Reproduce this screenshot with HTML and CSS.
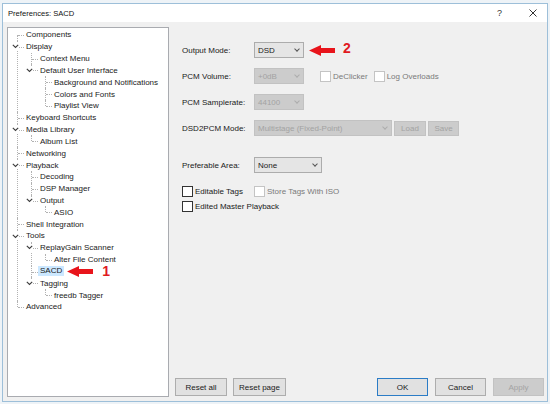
FILE: index.html
```
<!DOCTYPE html>
<html>
<head>
<meta charset="utf-8">
<link rel="stylesheet" href="styles.css">
</head>
<body>
<div class="desk">
  <div class="win">
    <div class="titlebar">
      <span class="title">Preferences: SACD</span>
      <span class="tb-help">?</span>
      <span class="tb-close"><svg width="8" height="8" viewBox="0 0 8 8"><path d="M0.5 0.5 L7.5 7.5 M7.5 0.5 L0.5 7.5" stroke="#333" stroke-width="1" fill="none"/></svg></span>
    </div>
    <div class="body">
      <div class="treebox">
        <ul class="tree">
          <li><div class="row">Components</div></li>
          <li class="exp"><div class="row"><span class="tw"><svg width="7" height="5" viewBox="0 0 7 5"><path d="M0.8 0.8 L3.5 3.5 L6.2 0.8" stroke="#3c3c3c" stroke-width="1.1" fill="none"/></svg></span>Display</div>
            <ul>
              <li><div class="row">Context Menu</div></li>
              <li class="exp"><div class="row"><span class="tw"><svg width="7" height="5" viewBox="0 0 7 5"><path d="M0.8 0.8 L3.5 3.5 L6.2 0.8" stroke="#3c3c3c" stroke-width="1.1" fill="none"/></svg></span>Default User Interface</div>
                <ul>
                  <li><div class="row">Background and Notifications</div></li>
                  <li><div class="row">Colors and Fonts</div></li>
                  <li><div class="row">Playlist View</div></li>
                </ul>
              </li>
            </ul>
          </li>
          <li><div class="row">Keyboard Shortcuts</div></li>
          <li class="exp"><div class="row"><span class="tw"><svg width="7" height="5" viewBox="0 0 7 5"><path d="M0.8 0.8 L3.5 3.5 L6.2 0.8" stroke="#3c3c3c" stroke-width="1.1" fill="none"/></svg></span>Media Library</div>
            <ul>
              <li><div class="row">Album List</div></li>
            </ul>
          </li>
          <li><div class="row">Networking</div></li>
          <li class="exp"><div class="row"><span class="tw"><svg width="7" height="5" viewBox="0 0 7 5"><path d="M0.8 0.8 L3.5 3.5 L6.2 0.8" stroke="#3c3c3c" stroke-width="1.1" fill="none"/></svg></span>Playback</div>
            <ul>
              <li><div class="row">Decoding</div></li>
              <li><div class="row">DSP Manager</div></li>
              <li class="exp"><div class="row"><span class="tw"><svg width="7" height="5" viewBox="0 0 7 5"><path d="M0.8 0.8 L3.5 3.5 L6.2 0.8" stroke="#3c3c3c" stroke-width="1.1" fill="none"/></svg></span>Output</div>
                <ul>
                  <li><div class="row">ASIO</div></li>
                </ul>
              </li>
            </ul>
          </li>
          <li><div class="row">Shell Integration</div></li>
          <li class="exp"><div class="row"><span class="tw"><svg width="7" height="5" viewBox="0 0 7 5"><path d="M0.8 0.8 L3.5 3.5 L6.2 0.8" stroke="#3c3c3c" stroke-width="1.1" fill="none"/></svg></span>Tools</div>
            <ul>
              <li class="exp"><div class="row"><span class="tw"><svg width="7" height="5" viewBox="0 0 7 5"><path d="M0.8 0.8 L3.5 3.5 L6.2 0.8" stroke="#3c3c3c" stroke-width="1.1" fill="none"/></svg></span>ReplayGain Scanner</div>
                <ul>
                  <li><div class="row">Alter File Content</div></li>
                </ul>
              </li>
              <li><div class="row"><span class="sel">SACD</span><svg class="arrow arrow-1" width="26" height="11" viewBox="0 0 26 11"><path d="M0 5.5 L12 0 L12 3 L26 3 L26 8 L12 8 L12 11 Z" fill="#e8141b"/></svg><span class="mark mark-1">1</span></div></li>
              <li class="exp"><div class="row"><span class="tw"><svg width="7" height="5" viewBox="0 0 7 5"><path d="M0.8 0.8 L3.5 3.5 L6.2 0.8" stroke="#3c3c3c" stroke-width="1.1" fill="none"/></svg></span>Tagging</div>
                <ul>
                  <li><div class="row">freedb Tagger</div></li>
                </ul>
              </li>
            </ul>
          </li>
          <li><div class="row">Advanced</div></li>
        </ul>
      </div>
      <div class="panel">
        <div class="form">
          <div class="frow">
            <span class="lbl">Output Mode:</span>
            <span class="combo w50"><span>DSD</span><span class="chev"></span></span>
            <svg class="arrow arrow-2" width="26" height="11" viewBox="0 0 26 11"><path d="M0 5.5 L12 0 L12 3 L26 3 L26 8 L12 8 L12 11 Z" fill="#e8141b"/></svg>
            <span class="mark mark-2">2</span>
          </div>
          <div class="frow">
            <span class="lbl">PCM Volume:</span>
            <span class="combo w50 dis"><span>+0dB</span><span class="chev"></span></span>
            <span class="cb dis cb-declick"></span><span class="cbtext dis">DeClicker</span>
            <span class="cb dis cb-log"></span><span class="cbtext dis">Log Overloads</span>
          </div>
          <div class="frow">
            <span class="lbl">PCM Samplerate:</span>
            <span class="combo w50 dis"><span>44100</span><span class="chev"></span></span>
          </div>
          <div class="frow">
            <span class="lbl">DSD2PCM Mode:</span>
            <span class="combo w138 dis"><span>Multistage (Fixed-Point)</span><span class="chev"></span></span>
            <span class="btn small dis w32">Load</span>
            <span class="btn small dis w31">Save</span>
          </div>
          <div class="frow pref">
            <span class="lbl">Preferable Area:</span>
            <span class="combo w68"><span>None</span><span class="chev"></span></span>
          </div>
          <div class="crow">
            <span class="ccell"><span class="cb"></span><span class="cbtext">Editable Tags</span></span>
            <span class="cb dis"></span><span class="cbtext dis">Store Tags With ISO</span>
          </div>
          <div class="crow">
            <span class="cb"></span><span class="cbtext">Edited Master Playback</span>
          </div>
        </div>
        <div class="btns">
          <span class="btn w52">Reset all</span>
          <span class="btn w53 ml6">Reset page</span>
          <span class="btn w51 ok">OK</span>
          <span class="btn w51 ml7">Cancel</span>
          <span class="btn w51 ml7 dis">Apply</span>
        </div>
      </div>
    </div>
  </div>
</div>
</body>
</html>
```
FILE: styles.css
```
html, body {
  margin: 0;
  padding: 0;
}
body {
  width: 550px;
  height: 404px;
  overflow: hidden;
  background: #eef3f7;
  font-family: "Liberation Sans", Arial, sans-serif;
  font-size: 8px;
  color: #1a1a1a;
}
.desk {
  padding: 3px 0 0 2px;
}
.win {
  width: 546px;
  height: 399px;
  box-sizing: border-box;
  border: 1px solid #9dbfd9;
  background: #f0f0f0;
  display: flex;
  flex-direction: column;
}
.titlebar {
  height: 18px;
  flex: none;
  background: #ffffff;
  display: flex;
  align-items: center;
  padding-left: 5px;
}
.title {
  font-size: 7.6px;
  color: #111;
}
.tb-help {
  margin-left: auto;
  font-size: 9px;
  color: #333;
  margin-right: 27px;
}
.tb-close {
  display: flex;
  margin-right: 10px;
}
.body {
  flex: 1;
  display: flex;
  padding: 5px 0 4px 4px;
  min-height: 0;
}
.treebox {
  width: 162px;
  flex: none;
  box-sizing: border-box;
  border: 1px solid #a9abb0;
  background: #ffffff;
}
.tree, .tree ul {
  list-style: none;
  margin: 0;
  padding: 0;
}
.tree {
  padding-top: 1px;
}
.tree ul {
  padding-left: 14px;
}
.tree li {
  position: relative;
}
.tree li::before {
  content: "";
  position: absolute;
  left: 9px;
  top: 0;
  bottom: 0;
  border-left: 1px dotted #b2b2b2;
}
.tree li:last-child::before {
  bottom: auto;
  height: 6px;
}
.tree > li:first-child::before {
  top: 6px;
}
.row {
  position: relative;
  height: 11.83px;
  padding-left: 18px;
  display: flex;
  align-items: center;
  white-space: nowrap;
}
.row::before {
  content: "";
  position: absolute;
  left: 10px;
  top: 6px;
  width: 6px;
  border-top: 1px dotted #b2b2b2;
}
.tw {
  position: absolute;
  left: 3px;
  top: 2px;
  width: 8px;
  height: 8px;
  background: #ffffff;
  z-index: 1;
  display: flex;
  align-items: center;
  justify-content: center;
}
.tw svg {
  display: block;
}
.sel {
  background: #cce8ff;
  margin-left: -2px;
  padding: 0 2px;
  line-height: 10px;
}
.arrow {
  flex: none;
  display: block;
}
.arrow-1 {
  margin-left: 3px;
}
.mark {
  color: #e01a1f;
  font-weight: bold;
  font-size: 14px;
  line-height: 10px;
}
.mark-1 {
  margin-left: 9px;
}
.panel {
  flex: 1;
  display: flex;
  flex-direction: column;
  padding: 15px 3px 1px 6px;
  min-width: 0;
}
.form {
  padding-left: 7px;
  display: flex;
  flex-direction: column;
}
.frow {
  display: flex;
  align-items: center;
  height: 16px;
  margin-bottom: 10px;
  white-space: nowrap;
}
.frow.pref {
  margin-top: 11px;
  margin-bottom: 11px;
}
.lbl {
  width: 72px;
  flex: none;
}
.combo {
  height: 16px;
  box-sizing: border-box;
  border: 1px solid #acacac;
  background: #e5e5e5;
  display: flex;
  align-items: center;
  justify-content: space-between;
  padding: 0 4px 0 3px;
  flex: none;
}
.chev {
  width: 3px;
  height: 3px;
  border-right: 1px solid #555;
  border-bottom: 1px solid #555;
  transform: rotate(45deg);
  margin-top: -3px;
}
.combo.dis {
  background: #cccccc;
  border-color: #c2c2c2;
  color: #a3a3a3;
}
.combo.dis .chev {
  border-color: #adadad;
}
.w50 { width: 50px; }
.w68 { width: 68px; }
.w138 { width: 138px; }
.w31 { width: 31px; }
.w32 { width: 32px; }
.w51 { width: 51px; }
.w52 { width: 52px; }
.w53 { width: 53px; }
.ml6 { margin-left: 6px; }
.ml7 { margin-left: 7px; }
.arrow-2 {
  margin-left: 5px;
}
.mark-2 {
  margin-left: 8px;
  margin-top: -4px;
}
.cb {
  width: 11px;
  height: 11px;
  box-sizing: border-box;
  border: 1px solid #333333;
  background: #ffffff;
  flex: none;
  margin-right: 2px;
}
.cb.dis {
  border-color: #c4c4c4;
}
.cbtext.dis {
  color: #7a7a7a;
}
.cb-declick {
  margin-left: 16px;
}
.cb-log {
  margin-left: 6px;
}
.crow {
  display: flex;
  align-items: center;
  height: 15px;
  white-space: nowrap;
}
.ccell {
  width: 72px;
  flex: none;
  display: flex;
  align-items: center;
}
.btn {
  height: 18px;
  box-sizing: border-box;
  border: 1px solid #adadad;
  background: #e1e1e1;
  display: flex;
  align-items: center;
  justify-content: center;
  flex: none;
  white-space: nowrap;
}
.btn.small {
  height: 15px;
  margin-left: 2px;
}
.btn.dis {
  background: #cccccc;
  border-color: #c2c2c2;
  color: #a3a3a3;
}
.btn.ok {
  margin-left: auto;
  border-color: #2b7cc6;
}
.btns {
  margin-top: auto;
  display: flex;
  align-items: flex-end;
}
```
